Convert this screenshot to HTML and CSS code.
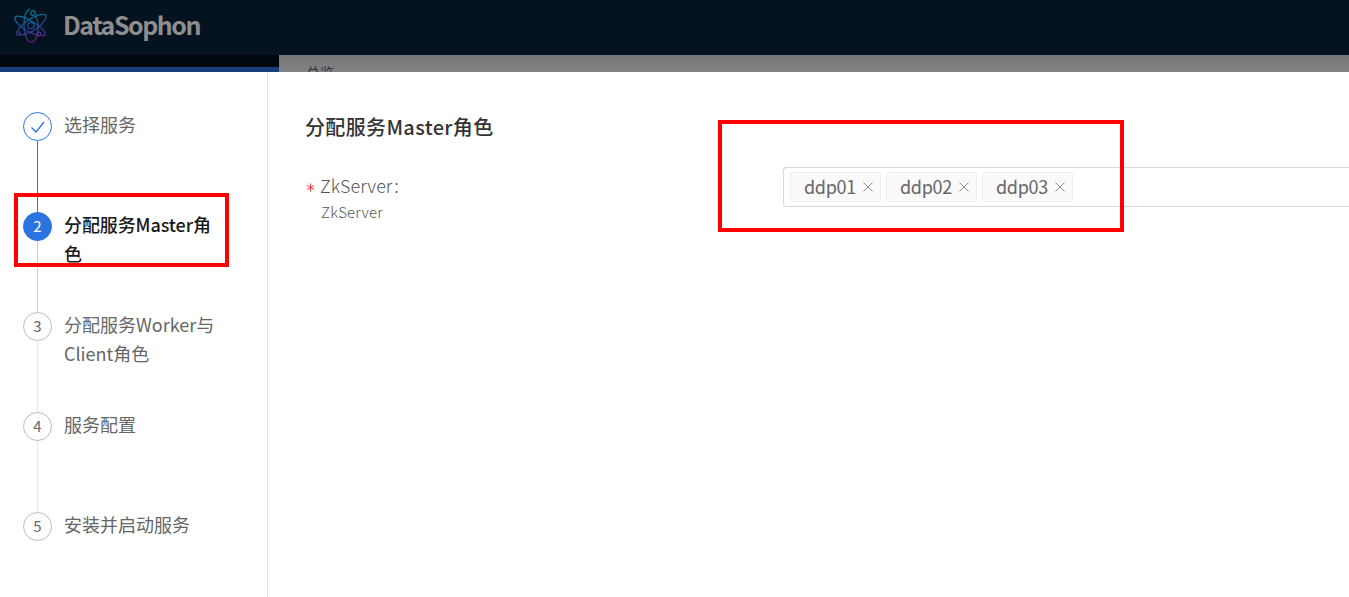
FILE: index.html
```html
<!DOCTYPE html>
<html lang="zh-CN">
<head>
  <meta charset="UTF-8">
  <title>DataSophon</title>
  <meta name="viewport" content="width=device-width, initial-scale=1.0">
  <link rel="stylesheet" href="styles.css">
</head>
<body>

<header class="header">
  <svg class="logo" viewBox="0 0 36 38" fill="none" stroke-width="1.2">
    <defs>
      <linearGradient id="logoColor" gradientUnits="userSpaceOnUse" x1="14" y1="2" x2="20" y2="36">
        <stop offset="0" stop-color="#087f91"/>
        <stop offset="0.5" stop-color="#1c5096"/>
        <stop offset="0.75" stop-color="#463596"/>
        <stop offset="1" stop-color="#92118f"/>
      </linearGradient>
    </defs>
    <g stroke="url(#logoColor)">
      <path d="M17 2c-4 1-6 8-6 16 0 9 3 17 7 17 5 0 8-8 7-17 0-4-1-7-3-9"/>
      <circle cx="20" cy="6" r="2.3"/>
      <path d="M2 10c3-2 11 0 18 5 8 5 13 10 12 13-1 1-2 1-4 0M2 10c-1 3 3 8 9 12 5 3 9 5 13 6"/>
      <path d="M33 8c-4-2-12 1-19 6-5 4-9 8-10 11M33 8c1 3-3 9-10 14-6 4-12 6-17 6"/>
      <path d="M4 25h3v3H4z"/>
      <circle cx="26" cy="27" r="1.8"/>
      <circle cx="18" cy="18.500" r="3.200"/>
    </g>
  </svg>
  <span class="brand">DataSophon</span>
</header>

<div class="backdrop">
  <div class="menu"></div>
  <div class="tabs"><span>总览</span></div>
</div>

<div class="modal">
  <aside class="steps">
    <div class="step finish">
      <div class="step-icon">
        <svg width="16" height="16" viewBox="0 0 16 16"><path d="M1.500 8.500l4.500 4.500L14 3" fill="none" stroke="#2a73e0" stroke-width="1.3"/></svg>
      </div>
      <div class="step-title">选择服务</div>
    </div>
    <div class="step active">
      <div class="step-icon"><span>2</span></div>
      <div class="step-title">分配服务Master角色</div>
      <div class="mark mark-step"></div>
    </div>
    <div class="step">
      <div class="step-icon"><span>3</span></div>
      <div class="step-title">分配服务Worker与Client角色</div>
    </div>
    <div class="step">
      <div class="step-icon"><span>4</span></div>
      <div class="step-title">服务配置</div>
    </div>
    <div class="step">
      <div class="step-icon"><span>5</span></div>
      <div class="step-title">安装并启动服务</div>
    </div>
  </aside>

  <main class="content">
    <h2>分配服务Master角色</h2>
    <div class="form-item">
      <div class="form-label">
        <div class="label-name">
          <svg class="required" viewBox="0 0 10 10"><path d="M5 .5v9M1 2.700l8 4.600M9 2.700L1 7.300"/></svg>
          <span>ZkServer</span><span class="colon">:</span>
        </div>
        <div class="label-desc">ZkServer</div>
      </div>
      <div class="select">
        <div class="tag"><span>ddp01</span><svg class="close" viewBox="0 0 10 10"><path d="M.5 .5l9 9M9.500 .5l-9 9"/></svg></div>
        <div class="tag"><span>ddp02</span><svg class="close" viewBox="0 0 10 10"><path d="M.5 .5l9 9M9.500 .5l-9 9"/></svg></div>
        <div class="tag"><span>ddp03</span><svg class="close" viewBox="0 0 10 10"><path d="M.5 .5l9 9M9.500 .5l-9 9"/></svg></div>
        <div class="mark mark-select"></div>
      </div>
    </div>
  </main>
</div>

</body>
</html>
```
FILE: styles.css
```css
* {
  box-sizing: border-box;
}
body {
  margin: 0;
  height: 597px;
  overflow: hidden;
  font-family: "Noto Sans CJK SC", sans-serif;
  font-size: 18px;
  color: #666;
  background: #fff;
}
.header {
  display: flex;
  align-items: flex-start;
  height: 55px;
  padding: 7px 0 0 13px;
  background: #051220;
}
.logo {
  width: 36px;
  height: 38px;
}
.brand {
  margin-left: 14px;
  font-size: 25px;
  font-weight: 700;
  line-height: 34px;
  letter-spacing: -1.5px;
  color: #8e8e8e;
}
.backdrop {
  display: flex;
  height: 17px;
  background: #173f7f;
}
.menu {
  width: 279px;
  height: 12px;
  background: #01070f;
}
.tabs {
  flex: 1;
  height: 17px;
  padding: 6px 0 0 27px;
  overflow: hidden;
  background: linear-gradient(#77777a, #828285);
  font-size: 14px;
  line-height: 22px;
  color: #303335;
}
.modal {
  display: flex;
  height: 525px;
  background: #fff;
  border-top-left-radius: 2px;
}
.steps {
  width: 268px;
  padding: 40px 48px 0 23px;
  border-right: 1px solid #e3e3e3;
}
.step {
  display: flex;
  position: relative;
  height: 100px;
}
.step:not(:last-child)::after {
  content: "";
  position: absolute;
  left: 14px;
  top: 29px;
  width: 1px;
  height: 71px;
  background: #e8e8e8;
}
.step.finish::after {
  background: #2a73e0;
}
.step.active::after {
  background: #ccc;
}
.step-icon {
  display: flex;
  flex: none;
  align-items: center;
  justify-content: center;
  width: 29px;
  height: 29px;
  margin-right: 12px;
  border: 1px solid #bbb;
  border-radius: 50%;
  font-size: 15px;
}
.step-icon span {
  padding-bottom: 1px;
  line-height: 26px;
}
.finish .step-icon {
  border-color: #2a73e0;
}
.active .step-icon {
  border-color: #2a73e0;
  background: #2a73e0;
  color: #fff;
}
.step-title {
  margin-top: -2px;
  line-height: 29px;
}
.active .step-title {
  font-weight: 500;
  letter-spacing: -0.1px;
  color: #1a1a1a;
}
.step.finish:not(:last-child)::after {
  background: #2a73e0;
}
.step.active:not(:last-child)::after {
  background: #ccc;
}
.content {
  flex: 1;
  padding: 40px 0 0 37px;
}
h2 {
  margin: 0;
  font-size: 20px;
  font-weight: 500;
  line-height: 30px;
  letter-spacing: 0.35px;
  color: #333;
}
.form-item {
  display: flex;
  margin-top: 25px;
}
.form-label {
  width: 478px;
}
.label-name {
  display: flex;
  align-items: center;
  height: 38px;
  line-height: 38px;
  font-weight: 300;
  color: #555;
}
.label-name span {
  margin-top: -2px;
}
.required {
  width: 9px;
  height: 9px;
  margin: 2px 5px 0 1px;
  fill: none;
  stroke: #f5222d;
}
.label-name .colon {
  margin-left: 2px;
}
.label-desc {
  padding-left: 16px;
  font-size: 15px;
  font-weight: 300;
  line-height: 14px;
  letter-spacing: 0.2px;
  color: #555;
}
.select {
  display: flex;
  position: relative;
  flex: 1;
  gap: 5px;
  height: 40px;
  padding: 4px 6px;
  border: 1px solid #d9d9d9;
  border-right: 0;
  border-radius: 4px 0 0 4px;
}
.tag {
  display: flex;
  align-items: center;
  width: 91px;
  height: 30px;
  padding-left: 13px;
  border: 1px solid #eee;
  border-radius: 3px;
  background: #fafafa;
  line-height: 28px;
}
.tag span {
  margin-top: -3px;
  letter-spacing: -0.3px;
}
.close {
  width: 10px;
  height: 10px;
  margin-left: 7px;
  fill: none;
  stroke: #8c8c8c;
}
/* red highlight frames */
.mark {
  position: absolute;
  border: 4px solid #f00;
}
.mark-step {
  left: -9px;
  top: -19px;
  width: 215px;
  height: 74px;
  z-index: 1;
}
.mark-select {
  left: -66px;
  top: -48px;
  width: 406px;
  height: 112px;
}
```
